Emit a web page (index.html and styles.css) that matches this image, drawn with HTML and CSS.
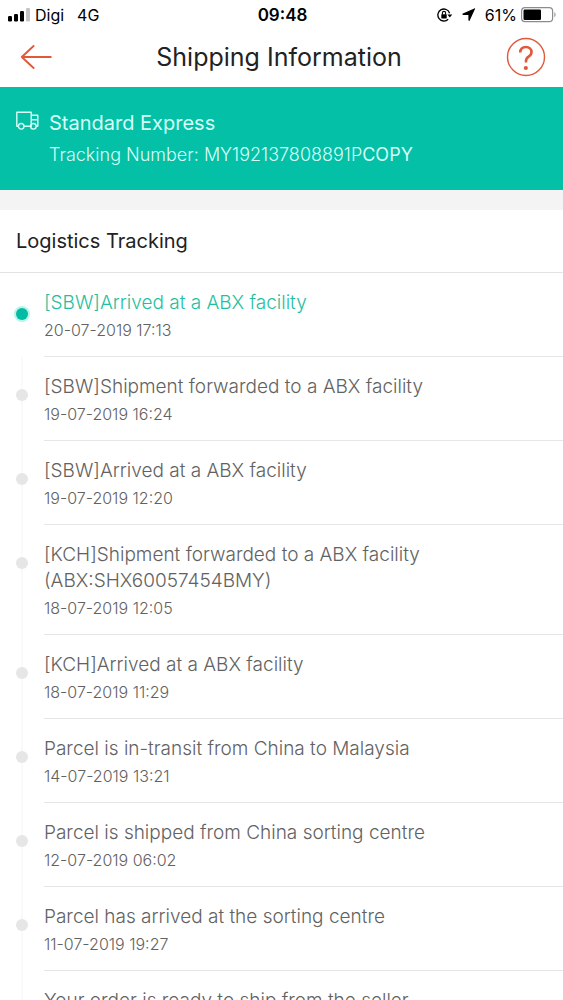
FILE: index.html
```html
<!DOCTYPE html>
<html lang="en">
<head>
<meta charset="utf-8">
<meta name="viewport" content="width=device-width, initial-scale=1">
<title>Shipping Information</title>
<link rel="stylesheet" href="styles.css">
</head>
<body>
<div class="app">
  <div class="status">
    <div class="status-left">
      <svg class="signal" width="22" height="14" viewBox="0 0 22 14" aria-hidden="true">
        <rect x="0" y="8" width="4" height="5.500" rx="1.200"/>
        <rect x="6" y="6" width="4" height="7.500" rx="1.200"/>
        <rect x="12" y="3" width="4" height="10.500" rx="1.200"/>
        <rect x="18" y="0" width="4" height="13.500" rx="1.200" fill="#c4c4c4"/>
      </svg>
      <span class="carrier">Digi</span>
      <span>4G</span>
    </div>
    <div class="clock">09:48</div>
    <div class="status-right">
      <svg width="16" height="14" viewBox="0 0 16 14" fill="none" stroke="#000" stroke-width="1.3" aria-hidden="true">
        <path d="M12.6 5.2A6 6 0 1 0 11.2 11.2"/>
        <path d="M10.4 6.4h4.8l-2.4 3.2z" fill="#000" stroke="none"/>
        <rect x="4.3" y="6.2" width="5.4" height="4.2" rx=".6" fill="#000" stroke="none"/>
        <path d="M5.4 6.5V5a1.6 1.6 0 0 1 3.2 0v1.5" stroke-width="1.1"/>
      </svg>
      <svg class="location" width="14" height="13" viewBox="0 0 14 13" aria-hidden="true"><path d="M12.300.4.9 5.600c-.8.4-.6 1.300.3 1.300h5.200v5.200c0 .9.9 1.100 1.300.3L13 1.100c.3-.6-.2-1-.7-.7z"/></svg>
      <span>61%</span>
      <svg class="battery" width="36" height="16" viewBox="0 0 36 16" aria-hidden="true">
        <rect x=".6" y=".6" width="31" height="14" rx="3.4" fill="#fff" stroke="#8c8c8c" stroke-width="1.2"/>
        <rect x="2.5" y="2.5" width="17.5" height="10.4" rx="1.2"/>
        <path d="M33.4 5.2c1.5.6 1.5 4.3 0 4.9z" fill="#8c8c8c"/>
      </svg>
    </div>
  </div>
  <header class="nav">
    <button class="icon-btn" aria-label="Back">
      <svg width="32" height="26" viewBox="0 0 32 26" fill="none" stroke="#e0593a" stroke-width="1.900" stroke-linecap="round" stroke-linejoin="round"><path d="M13.600 2 1.800 13l11.800 11M1.800 13h29"/></svg>
    </button>
    <h1>Shipping Information</h1>
    <button class="icon-btn" aria-label="Help">
      <svg width="40" height="40" viewBox="0 0 40 40" fill="none" stroke="#e0593a"><circle cx="20" cy="20" r="18.500" stroke-width="1.400"/><path d="M14.200 15.500c.2-3.600 2.500-5.500 5.700-5.500 3.300 0 5.600 2 5.600 4.900 0 2.200-1.100 3.500-2.900 4.700-1.900 1.200-2.600 2.200-2.600 4.500v1.500" stroke-width="2.600"/><circle cx="19.800" cy="31" r="2.100" fill="#e0593a" stroke="none"/></svg>
    </button>
  </header>
  <main class="content">
    <section class="carrier-card">
      <svg class="truck" width="24" height="20" viewBox="0 0 24 20" fill="none" stroke="#d5fff7" stroke-width="1.400" stroke-linejoin="round" aria-hidden="true">
        <path d="M2.400 15.300H.8V1.200h14.400v14.100H8M15.200 4.300h6.600v11h-1.400M21.800 8.800h-6.600"/>
        <circle cx="5.200" cy="15.300" r="2.800"/><circle cx="17.400" cy="15.300" r="2.800"/>
      </svg>
      <div>
        <h2>Standard Express</h2>
        <p class="tracking">Tracking Number: MY192137808891P<button class="copy">COPY</button></p>
      </div>
    </section>
    <section class="logistics">
      <h2>Logistics Tracking</h2>
      <ol class="events">
        <li class="current"><div class="event"><p>[SBW]Arrived at a ABX facility</p><time>20-07-2019 17:13</time></div></li>
        <li><div class="event"><p>[SBW]Shipment forwarded to a ABX facility</p><time>19-07-2019 16:24</time></div></li>
        <li><div class="event"><p>[SBW]Arrived at a ABX facility</p><time>19-07-2019 12:20</time></div></li>
        <li><div class="event"><p>[KCH]Shipment forwarded to a ABX facility<br>(ABX:SHX60057454BMY)</p><time>18-07-2019 12:05</time></div></li>
        <li><div class="event"><p>[KCH]Arrived at a ABX facility</p><time>18-07-2019 11:29</time></div></li>
        <li><div class="event"><p>Parcel is in-transit from China to Malaysia</p><time>14-07-2019 13:21</time></div></li>
        <li><div class="event"><p>Parcel is shipped from China sorting centre</p><time>12-07-2019 06:02</time></div></li>
        <li><div class="event"><p>Parcel has arrived at the sorting centre</p><time>11-07-2019 19:27</time></div></li>
        <li><div class="event"><p>Your order is ready to ship from the seller</p></div></li>
      </ol>
    </section>
  </main>
</div>
</body>
</html>
```
FILE: styles.css
```css
* { box-sizing: border-box; }
body, h1, h2, p, ol { margin: 0; padding: 0; }
body {
  font-family: Inter, "Liberation Sans", sans-serif;
  color: #222;
  background: #fff;
}
button {
  border: 0;
  padding: 0;
  background: none;
  font: inherit;
  color: inherit;
}
svg { display: block; flex: none; }
.app {
  display: flex;
  flex-direction: column;
  height: 100vh;
}
.status {
  display: grid;
  grid-template-columns: 1fr auto 1fr;
  align-items: center;
  height: 29px;
  padding: 0 6px 0 8px;
  font-size: 16px;
  color: #000;
}
.status-left, .status-right { display: flex; align-items: center; }
.status-right { justify-content: flex-end; }
.carrier { margin: 0 13px 0 5px; }
.clock { font-weight: 600; font-size: 17px; }
.location { margin: 0 9px; }
.battery { margin-left: 4px; }
.nav {
  display: flex;
  align-items: center;
  justify-content: space-between;
  height: 58px;
  padding: 0 17px 2px 20px;
}
.nav h1 { font-size: 25px; font-weight: 400; line-height: 32px; }
.content {
  flex: 1;
  min-height: 0;
  overflow-y: auto;
  scrollbar-width: none;
}
.carrier-card {
  display: flex;
  gap: 9px;
  padding: 22px 16px;
  background: #04c0a7;
  color: #d5fff7;
}
.truck { margin-top: 2px; }
.carrier-card h2 { font-size: 20px; font-weight: 400; line-height: 28px; }
.tracking {
  display: flex;
  margin-top: 5px;
  font-size: 18px;
  font-weight: 300;
  line-height: 26px;
}
.copy { font-weight: 400; }
.logistics { border-top: 20px solid #f4f4f4; }
.logistics h2 {
  padding: 16px;
  border-bottom: 1px solid #e3e3e3;
  font-size: 20px;
  font-weight: 400;
  line-height: 30px;
}
.events { list-style: none; }
.events li {
  display: grid;
  grid-template-columns: 12px 1fr;
  gap: 16px;
  padding-left: 16px;
  background: linear-gradient(#fafafa, #fafafa) 21px 0 / 2px 100% no-repeat;
}
.events .current { background: none; }
.events li::before {
  content: "";
  width: 12px;
  height: 12px;
  margin-top: 32px;
  border-radius: 50%;
  background: #e6e6e6;
}
.events .current::before {
  margin-top: 35px;
  background: #04bba4;
  box-shadow: 0 0 0 2px #b9f5ea;
}
.event {
  padding: 17px 16px 17px 0;
  border-bottom: 1px solid #e6e6e6;
  color: #626262;
}
.event p { font-size: 19px; font-weight: 300; line-height: 26px; }
.event time {
  display: block;
  margin-top: 5px;
  font-size: 16px;
  font-weight: 300;
  line-height: 18px;
}
.events .current p { color: #1fc0a1; }
```
